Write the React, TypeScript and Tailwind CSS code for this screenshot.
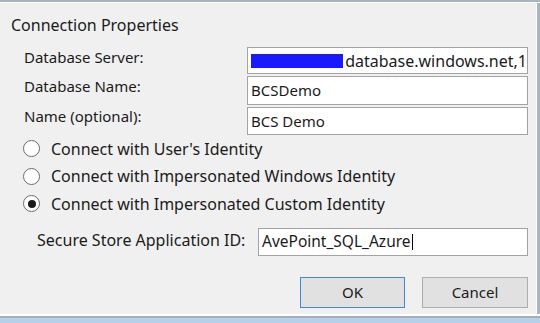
const font = { fontFamily: '"Noto Sans", "Open Sans", sans-serif' };

function TextBox({ children, className }: { children: React.ReactNode; className: string }) {
  return (
    <div
      className={`flex items-center overflow-hidden whitespace-nowrap border border-[#a3a3a3] bg-white pl-[3px] text-[#1b1b1b] ${className}`}
    >
      {children}
    </div>
  );
}

function Radio({ checked, label }: { checked?: boolean; label: string }) {
  return (
    <div className="flex h-[27.5px] items-center">
      <span className="ml-[23px] flex h-[17px] w-[17px] items-center justify-center rounded-full border border-[#6a6a6a] bg-white">
        {checked && <span className="h-[8px] w-[8px] rounded-full bg-[#1a1a1a]" />}
      </span>
      <span className="ml-[11px] text-[16px] text-[#1b1b1b]">{label}</span>
    </div>
  );
}

export default function App() {
  return (
    <div style={font} className="flex h-[323px] w-[540px] flex-col overflow-hidden bg-[#f0f0f0]">
      <div className="h-[2px] bg-[#a7b4c4]" />
      <div className="h-[1px] bg-white" />
      <div className="flex flex-1 border-r-[3px] border-[#a9b6c6]">
        <div className="flex flex-1 flex-col border-r border-white">
          <div className="ml-[11px] mt-[12px] text-[16px] leading-[20px] text-[#1b1b1b]">Connection Properties</div>
          <div className="mt-[12px] grid grid-cols-[247px_281px]">
            <div className="flex h-[28px] items-center pb-[7px] pl-[24px] text-[15px] text-[#1b1b1b]">Database Server:</div>
            <TextBox className="h-[27px] text-[16px]">
              <span className="mr-[2px] inline-block h-[14px] w-[95px] bg-[#1a1aff]" />
              database.windows.net,1
            </TextBox>
            <div className="flex h-[30px] items-center pb-[7px] pl-[24px] text-[15px] text-[#1b1b1b]">Database Name:</div>
            <TextBox className="mt-[1px] h-[29px] text-[15px]">BCSDemo</TextBox>
            <div className="flex h-[30px] items-center pb-[7px] pl-[24px] text-[15px] text-[#1b1b1b]">Name (optional):</div>
            <TextBox className="mt-[2px] h-[28px] text-[15px]">BCS Demo</TextBox>
          </div>
          <div className="flex flex-col">
            <Radio label="Connect with User's Identity" />
            <Radio label="Connect with Impersonated Windows Identity" />
            <Radio checked label="Connect with Impersonated Custom Identity" />
          </div>
          <div className="mt-[10px] flex items-center">
            <span className="ml-[37px] w-[221px] pb-[3px] text-[16px] text-[#1b1b1b]">Secure Store Application ID:</span>
            <TextBox className="h-[28px] w-[270px] text-[15.5px]">
              AvePoint_SQL_Azure<span className="ml-[1px] inline-block h-[16px] w-[1px] bg-black" />
            </TextBox>
          </div>
          <div className="mt-[21px] flex gap-[17px] pl-[300px]">
            <button className="h-[31px] w-[105px] border border-[#3c8bd6] bg-[#e1e1e1] text-[15px] text-[#1b1b1b]">
              OK
            </button>
            <button className="h-[31px] w-[106px] border border-[#adadad] bg-[#e1e1e1] text-[15px] text-[#1b1b1b]">
              Cancel
            </button>
          </div>
        </div>
      </div>
      <div className="h-[2px] bg-white" />
      <div className="h-[2px] bg-[#9fb0c4]" />
      <div className="h-[5px] bg-[#b6d0ea]" />
    </div>
  );
}
